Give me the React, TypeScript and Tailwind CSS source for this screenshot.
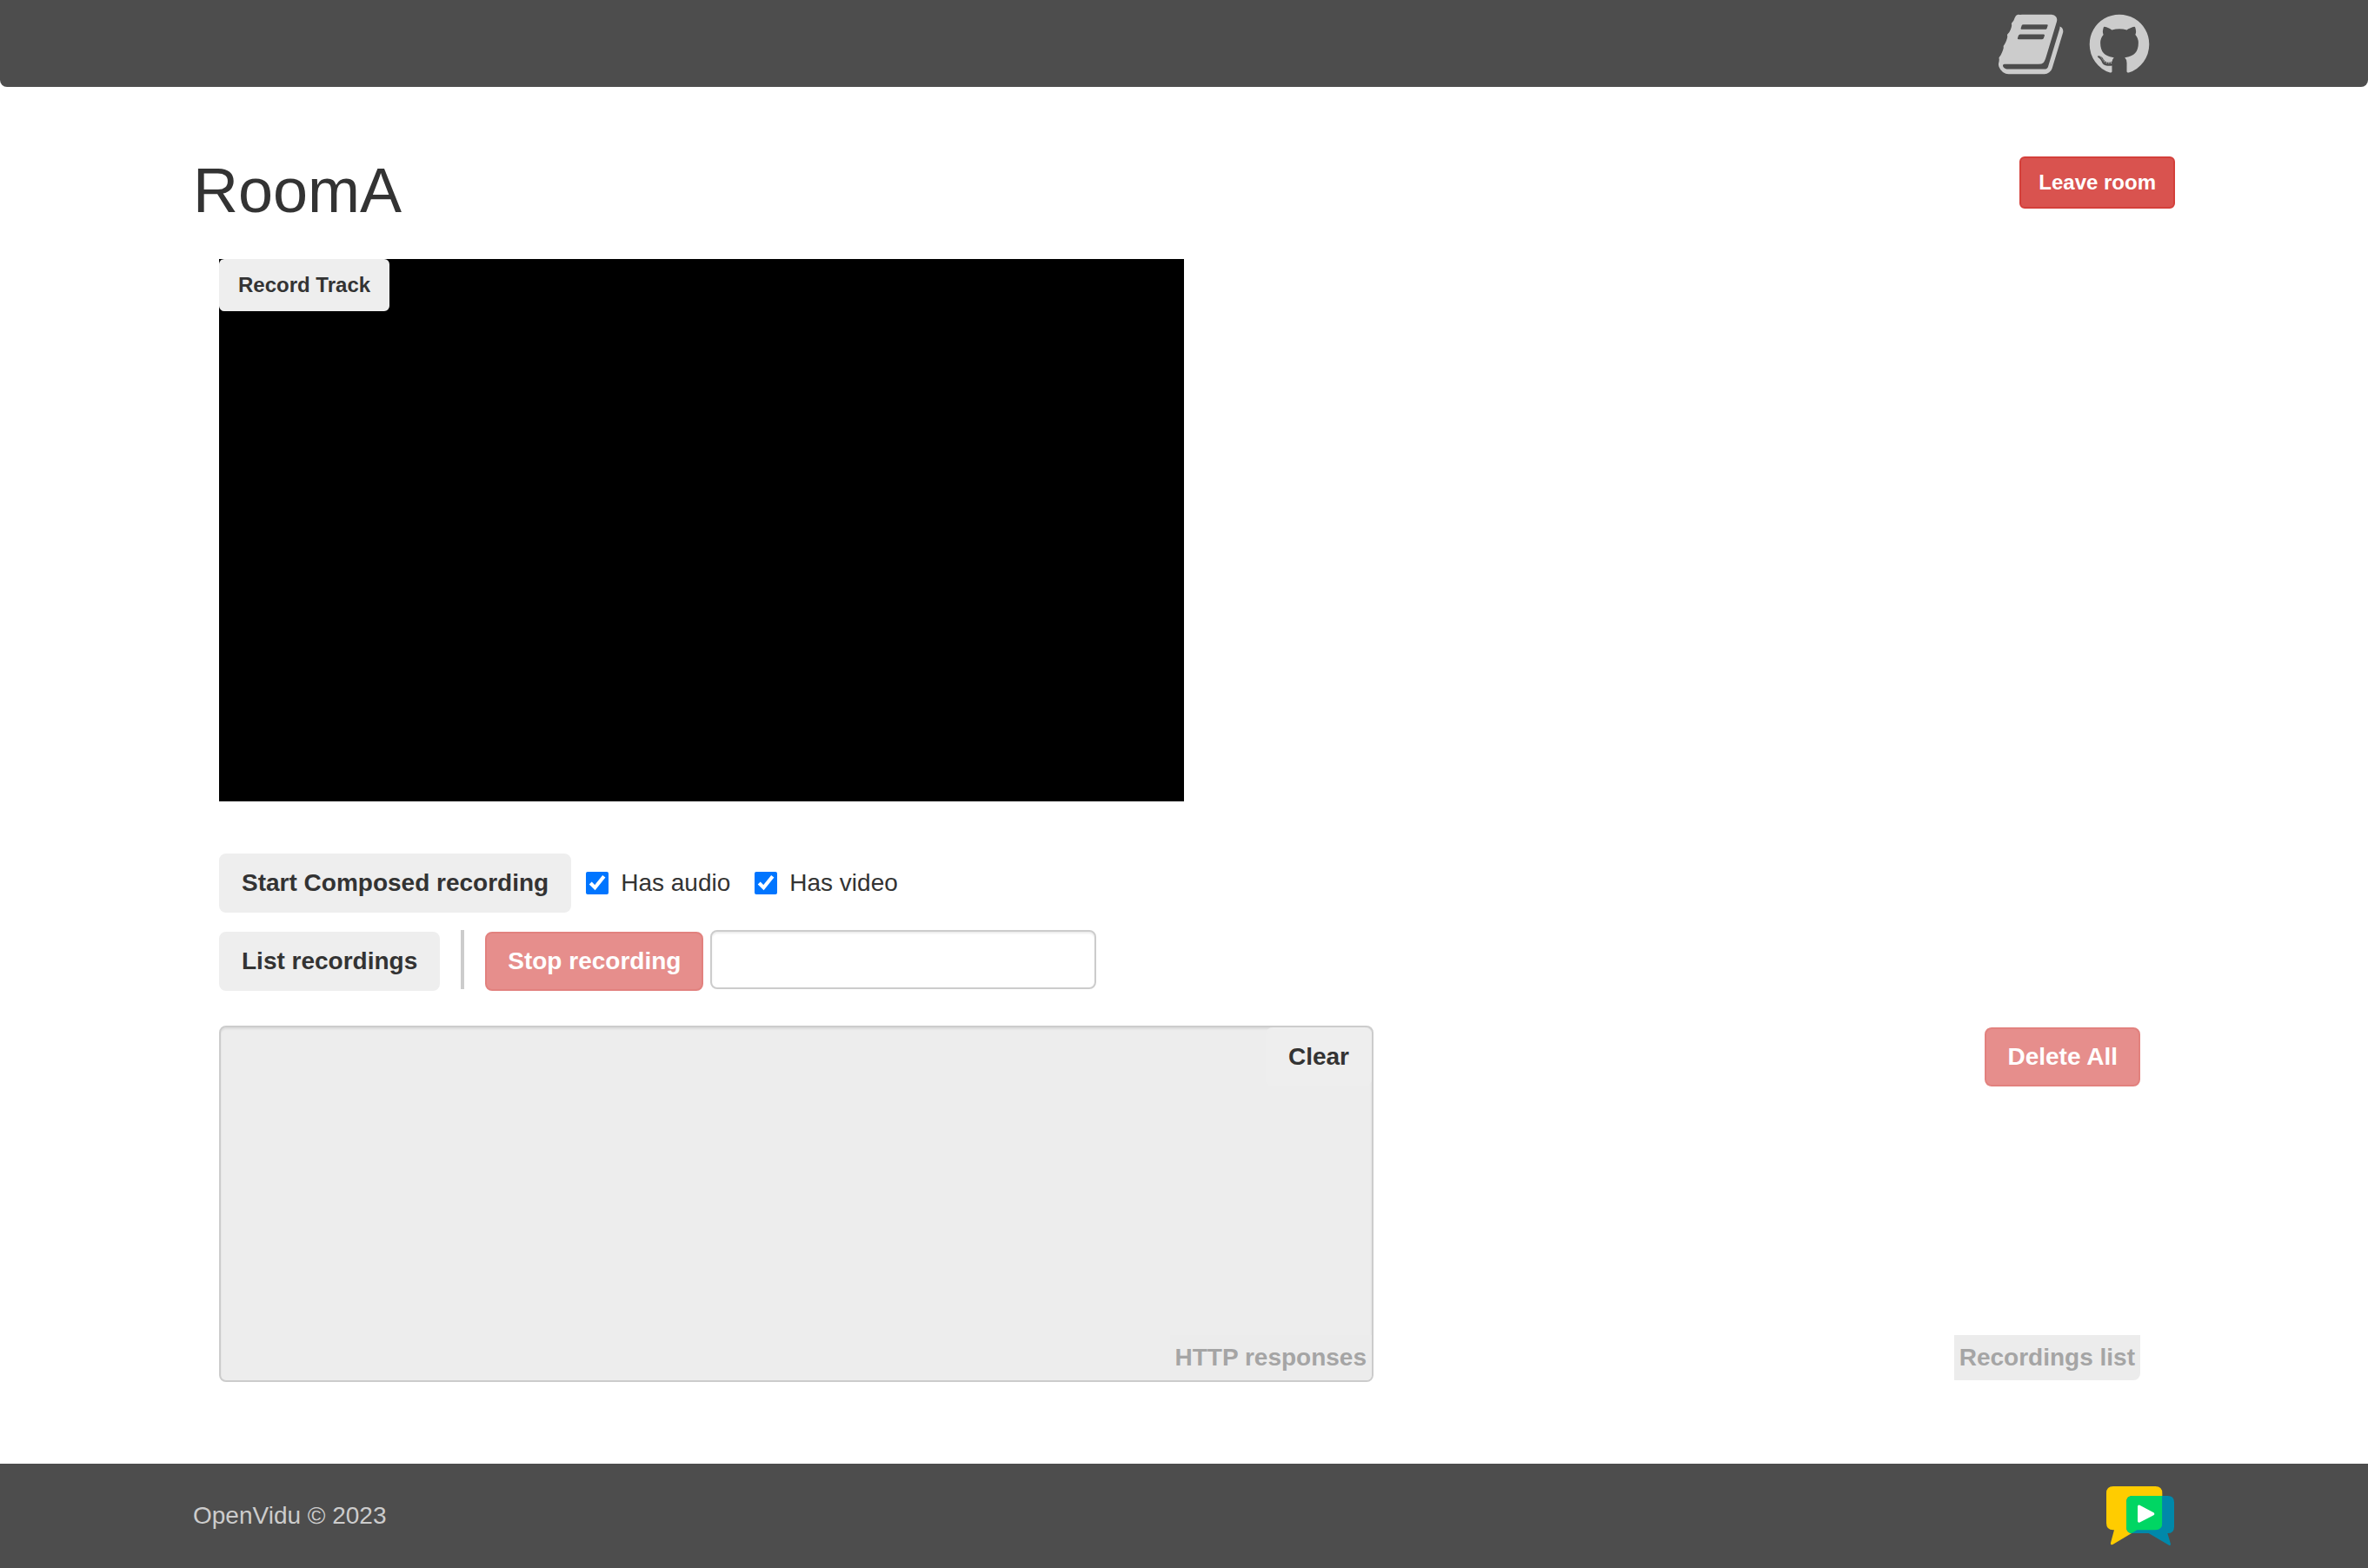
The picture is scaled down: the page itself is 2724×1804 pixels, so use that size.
import React, { useState } from "react";

const BOOK_PATH =
  "M1639 478q40 57 18 129l-275 906q-19 64-76.5 107.5t-122.5 43.5h-923q-77 0-148.5-53.5t-99.5-131.5q-24-67-2-127 0-4 3-27t4-37q1-8-3-21.5t-3-19.5q2-11 8-21t16.5-23.5 16.5-23.5q23-38 45-91.5t30-91.5q3-10 .5-30t-.5-28q3-11 17-28t17-23q21-36 42-92t25-90q1-9-2.5-32t.5-28q4-13 22-30.5t22-22.5q19-26 42.5-84.5t27.5-96.5q1-8-3-25.5t-2-26.5q2-8 9-18t18-23 17-21q8-12 16.5-30.5t15-35 16-36 19.5-32 26.5-23.5 36-11.5 47.5 5.5l-1 3q38-9 51-9h761q74 0 114 56t18 130l-274 906q-36 119-71.5 153.5t-128.5 34.5h-869q-27 0-38 15-11 16-1 43 24 70 144 70h923q29 0 56-15.5t35-41.5l300-987q7-22 5-57 38 15 59 43zm-1064 2q-4 13 2 22.5t20 9.5h608q13 0 25.5-9.5t16.5-22.5l21-64q4-13-2-22.5t-20-9.5h-608q-13 0-25.5 9.5t-16.5 22.5zm-83 256q-4 13 2 22.5t20 9.5h608q13 0 25.5-9.5t16.5-22.5l21-64q4-13-2-22.5t-20-9.5h-608q-13 0-25.5 9.5t-16.5 22.5z";

const GITHUB_PATH =
  "M896 128q209 0 385.5 103t279.5 279.5 103 385.5q0 251-146.5 451.5t-378.5 277.5q-27 5-40-7t-13-30q0-3 .5-76.5t.5-134.5q0-97-52-142 57-6 102.5-18t94-39 81-66.5 53-105 20.5-150.5q0-119-79-206 37-91-8-204-28-9-81 11t-92 44l-38 24q-93-26-192-26t-192 26q-16-11-42.5-27t-83.5-38.5-85-13.5q-45 113-8 204-79 87-79 206 0 85 20.5 150t52.5 105 80.5 67 94 39 102.5 18q-39 36-49 103-21 10-45 15t-57 5-65.5-21.5-55.5-62.5q-19-32-48.5-52t-49.5-24l-20-3q-21 0-29 4.5t-5 11.5 9 14 13 12l7 5q22 10 43.5 38t31.5 51l10 23q13 38 44 61.5t67 30 69.5 7 55.5-3.5l23-4q0 38 .5 88.5t.5 54.5q0 18-13 30t-40 7q-232-77-378.5-277.5t-146.5-451.5q0-209 103-385.5t279.5-279.5 385.5-103zm-477 1103q3-7-7-12-10-3-13 2-3 7 7 12 9 6 13-2zm31 34q7-5-2-16-10-9-16-3-7 5 2 16 10 10 16 3zm30 45q9-7 0-19-8-13-17-6-9 5 0 18t17 7zm42 42q8-8-4-19-12-12-20-3-9 8 4 19 12 12 20 3zm57 25q3-11-13-16-15-4-19 7t13 15q15 6 19-6zm63 5q0-13-17-11-16 0-16 11 0 13 17 11 16 0 16-11zm58-10q-2-11-18-9-16 3-14 15t18 8 14-14z";

const YELLOW_BUBBLE =
  "M93 117H238Q262 117 262 141V244Q262 268 238 268H175L91 318Q82 321 84 312L96 268H93Q69 268 69 244V141Q69 117 93 117Z";
const BLUE_BUBBLE =
  "M160 150H281Q303 150 303 172V257Q303 279 281 279H280L291 316Q292 323 285 320L215 279H160Q138 279 138 257V172Q138 150 160 150Z";

function HeaderLink({ href, label, path }: { href: string; label: string; path: string }) {
  return (
    <a href={href} aria-label={label} title={label} className="block text-[#ccc]">
      <svg viewBox="0 0 1792 1792" className="size-20 fill-current" aria-hidden="true">
        <path d={path} />
      </svg>
    </a>
  );
}

function OpenViduLogo() {
  return (
    <svg viewBox="69 117 234 204" className="h-[68px] w-[78px]" aria-hidden="true">
      <defs>
        <clipPath id="yellow-bubble">
          <path d={YELLOW_BUBBLE} />
        </clipPath>
      </defs>
      <path d={YELLOW_BUBBLE} fill="#ffcc00" />
      <path d={BLUE_BUBBLE} fill="#0088aa" />
      <path d={BLUE_BUBBLE} fill="#00d663" clipPath="url(#yellow-bubble)" />
      <path d="M182 187V237L230 212Z" fill="#fff" stroke="#fff" strokeWidth="10" strokeLinejoin="round" />
    </svg>
  );
}

type ButtonProps = React.ButtonHTMLAttributes<HTMLButtonElement> & {
  tone?: "plain" | "danger";
  size?: "small" | "normal";
};

function Button({ tone = "plain", size = "normal", className = "", ...rest }: ButtonProps) {
  const tones = {
    plain: "border-[#eee] bg-[#eee] text-[#333]",
    danger: "border-[#d43f3a] bg-[#d9534f] text-white disabled:opacity-65",
  };
  const sizes = {
    small: "rounded-md px-5 py-2.5 text-[24px] leading-9",
    normal: "rounded-lg px-6 py-3 text-[28px] leading-10",
  };
  return (
    <button
      type="button"
      className={`shrink-0 whitespace-nowrap border-2 font-bold ${tones[tone]} ${sizes[size]} ${className}`}
      {...rest}
    />
  );
}

function CheckOption({ label }: { label: string }) {
  const [checked, setChecked] = useState(true);
  return (
    <label className="flex items-center gap-3.5 whitespace-nowrap">
      <input
        type="checkbox"
        checked={checked}
        onChange={(e) => setChecked(e.target.checked)}
        className="size-[26px] accent-[#0075ff]"
      />
      {label}
    </label>
  );
}

export default function App() {
  const [recordingId, setRecordingId] = useState("");

  return (
    <div className="flex min-h-screen flex-col bg-white font-['Liberation_Sans',Arial,sans-serif] text-[28px] leading-10 text-[#333]">
      <header className="rounded-b-lg bg-[#4d4d4d]">
        <nav className="mx-auto flex h-[100px] w-full max-w-[2280px] items-center justify-end gap-[19px] pt-0.5 pr-6">
          <HeaderLink href="#docs" label="Documentation" path={BOOK_PATH} />
          <HeaderLink href="#github" label="GitHub repository" path={GITHUB_PATH} />
        </nav>
      </header>

      <main className="mx-auto w-full max-w-[2280px] pt-20 pb-20">
        <div className="flex items-start justify-between">
          <h1 className="text-[72px] leading-[79px]">RoomA</h1>
          <Button tone="danger" size="small">Leave room</Button>
        </div>

        <div className="mt-[39px] px-[30px]">
          <section className="grid grid-cols-2" aria-label="Videos">
            <div className="relative">
              <video className="block aspect-video w-full bg-black" />
              <Button size="small" className="absolute top-0 left-0">Record Track</Button>
            </div>
          </section>

          <div className="mt-[60px] flex items-center">
            <Button>Start Composed recording</Button>
            <div className="ml-[17px] flex items-center gap-7">
              <CheckOption label="Has audio" />
              <CheckOption label="Has video" />
            </div>
          </div>

          <div className="mt-5 flex h-[70px] items-end">
            <Button>List recordings</Button>
            <div className="mx-6 h-[68px] w-1 shrink-0 self-start bg-[#ccc]" />
            <Button tone="danger" disabled>Stop recording</Button>
            <input
              type="text"
              aria-label="Recording ID"
              value={recordingId}
              onChange={(e) => setRecordingId(e.target.value)}
              className="ml-2 h-[68px] w-1/5 self-start rounded-lg border-2 border-[#ccc] bg-white px-6 shadow-[inset_0_2px_2px_rgba(0,0,0,0.075)]"
            />
          </div>

          <div className="mt-10 mr-2.5 grid grid-cols-[1328fr_882fr]">
            <div className="relative h-[410px]">
              <textarea
                id="http-responses"
                readOnly
                className="block size-full resize-none rounded-lg border-2 border-[#ccc] bg-[#ededed] px-6 py-3 shadow-[inset_0_2px_2px_rgba(0,0,0,0.075)]"
              />
              <Button className="absolute top-0.5 right-0.5">Clear</Button>
              <label
                htmlFor="http-responses"
                className="absolute right-0.5 bottom-0.5 rounded-br-md bg-[#ececec] p-1.5 font-bold text-[#a5a5a5]"
              >
                HTTP responses
              </label>
            </div>
            <section className="flex flex-col items-end justify-between py-0.5" aria-labelledby="recordings-title">
              <Button tone="danger" disabled>Delete All</Button>
              <h2
                id="recordings-title"
                className="rounded-br-lg bg-[#ececec] p-1.5 font-bold text-[#a5a5a5]"
              >
                Recordings list
              </h2>
            </section>
          </div>
        </div>
      </main>

      <footer className="mt-auto bg-[#4d4d4d]">
        <div className="mx-auto flex h-[120px] w-full max-w-[2280px] items-center justify-between text-[#ccc]">
          <p>OpenVidu © 2023</p>
          <a href="#openvidu" aria-label="OpenVidu" className="pr-px">
            <OpenViduLogo />
          </a>
        </div>
      </footer>
    </div>
  );
}
